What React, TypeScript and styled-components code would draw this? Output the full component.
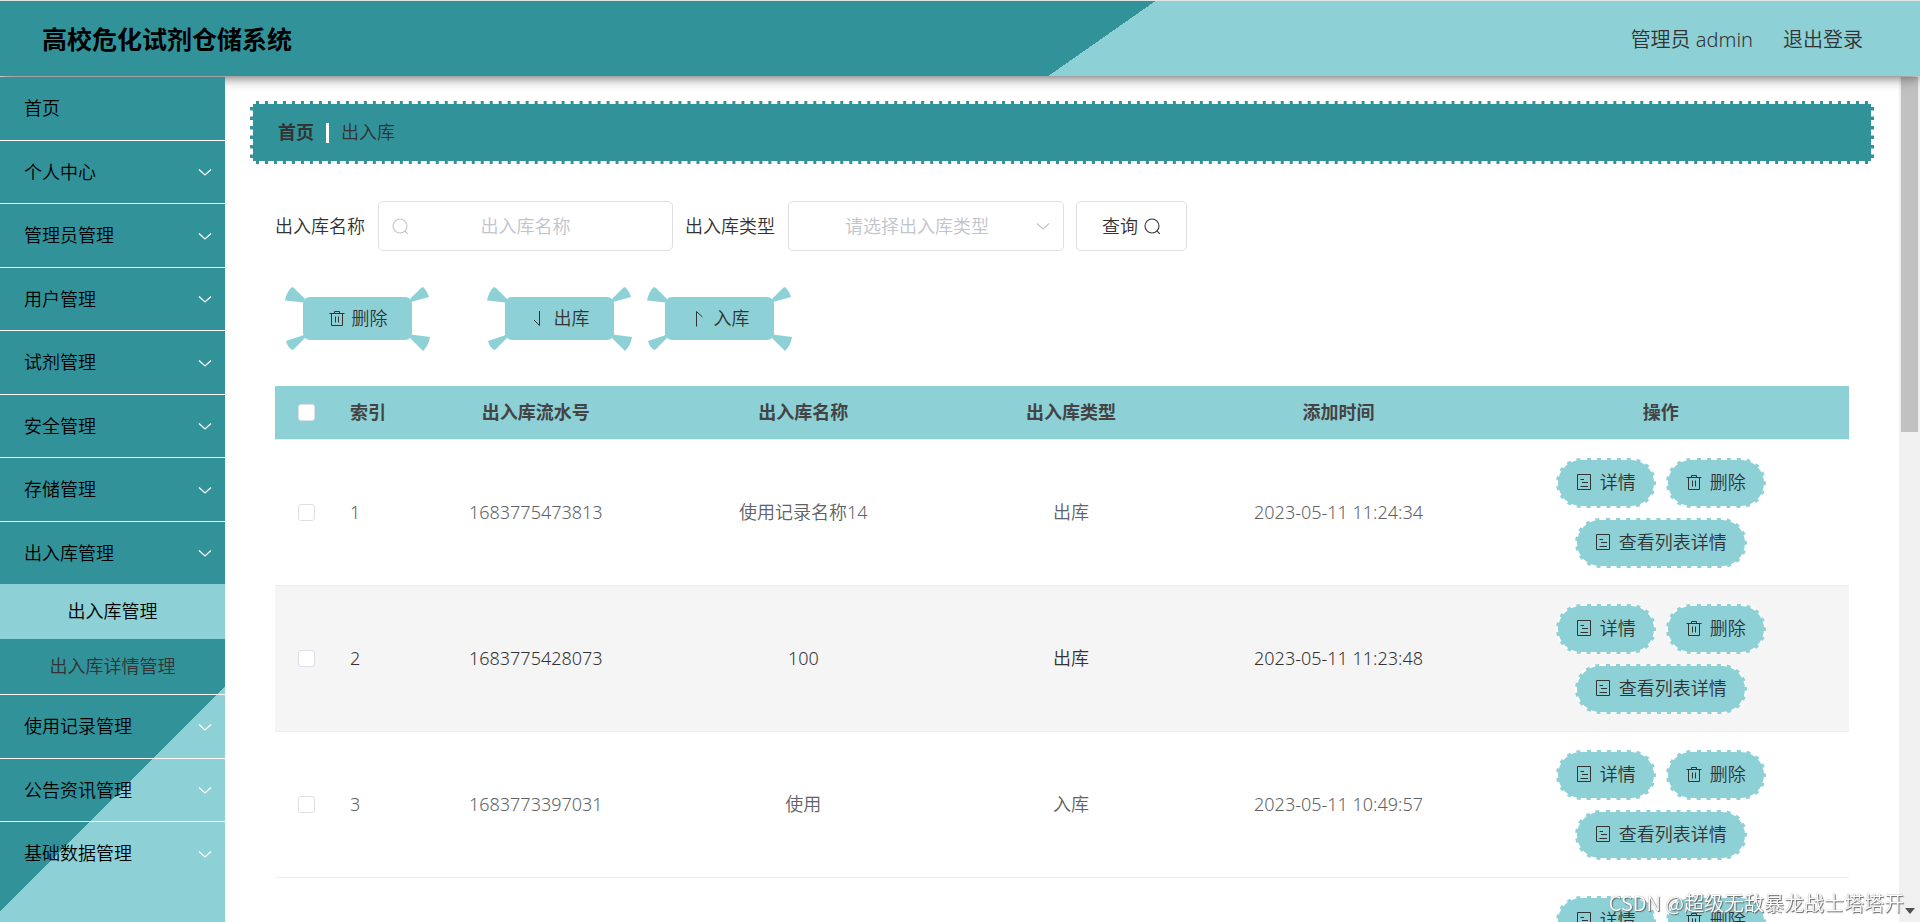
import React from "react";
import styled, { createGlobalStyle } from "styled-components";

const DEEP = "#31929a";
const LIGHT = "#8dd0d6";
const LINE = "#dcdfe6";

const GlobalStyle = createGlobalStyle`
  *, *::before, *::after { box-sizing: border-box; }
  body {
    margin: 0;
    background: #fff;
    color: #333;
    font-family: "Noto Sans", "Noto Sans CJK SC", sans-serif;
    font-size: 18px;
    font-weight: 350;
    line-height: 23px;
  }
  button, input, select { font: inherit; }
`;

const Page = styled.div`
  height: 100vh;
  display: flex;
  flex-direction: column;
  overflow: hidden;
`;

const Header = styled.header`
  position: relative;
  flex: none;
  height: 76px;
  margin-bottom: 1px;
  padding: 2px 57px 0 42px;
  display: flex;
  align-items: center;
  justify-content: space-between;
  border-top: 1px solid #dfe6e4;
  background: linear-gradient(145deg, ${DEEP} 57%, ${LIGHT} 57%);
  box-shadow: 0 1px 12px #555;
  z-index: 1;
`;

const Title = styled.h1`
  margin: 0;
  font-size: 25px;
  font-weight: 700;
  color: #000;
`;

const Account = styled.div`
  display: flex;
  gap: 30px;
  font-size: 20px;
  a { color: #333; text-decoration: none; }
`;

const Body = styled.div`
  flex: 1;
  min-height: 0;
  display: flex;
`;

const Sidebar = styled.nav`
  position: relative;
  z-index: 2;
  flex: none;
  width: 225px;
  background: linear-gradient(135deg, ${DEEP} 78%, ${LIGHT} 78%);
`;

const Menu = styled.ul`
  margin: 0;
  padding: 0;
  list-style: none;
`;

const MenuItem = styled.li`
  border-bottom: 1px solid #fff;
  &:last-child { border-bottom: 0; }
  &:nth-child(odd) > button { height: 63px; }
`;

const MenuButton = styled.button`
  width: 100%;
  height: 62px;
  padding: 0 13px 0 24px;
  display: flex;
  align-items: center;
  justify-content: space-between;
  border: 0;
  background: none;
  color: #000;
  svg { color: #fff; }
`;

const SubLink = styled.a<{ $active?: boolean }>`
  height: 55px;
  display: flex;
  align-items: center;
  justify-content: center;
  background: ${(p) => (p.$active ? LIGHT : "transparent")};
  color: ${(p) => (p.$active ? "#000" : "#333")};
  text-decoration: none;
`;

const Main = styled.main`
  flex: 1;
  min-width: 0;
  overflow: hidden;
  padding: 24px 25px 0;
`;

const Breadcrumb = styled.nav`
  height: 63px;
  padding: 0 25px;
  display: flex;
  align-items: center;
  gap: 12px;
  border: 3px dashed #fff;
  background: ${DEEP};
  a { color: #333; text-decoration: none; font-weight: 700; }
`;

const Divider = styled.span`
  width: 3px;
  height: 20px;
  background: #fff;
`;

const Content = styled.section`
  padding: 37px 25px 0;
`;

const Filters = styled.form`
  display: flex;
  align-items: center;
  gap: 12px;
`;

const Field = styled.div`
  display: flex;
  align-items: center;
  gap: 13px;
  white-space: nowrap;
`;

const Control = styled.div<{ $width: number }>`
  position: relative;
  width: ${(p) => p.$width}px;
  height: 50px;
  color: #c0c4cc;
  input, select {
    width: 100%;
    height: 100%;
    padding: 0 37px;
    border: 1px solid ${LINE};
    border-radius: 5px;
    background: #fff;
    color: #c0c4cc;
    text-align: center;
    text-align-last: center;
    appearance: none;
    outline: 0;
  }
  select { padding: 0 37px 0 19px; }
  input::placeholder { color: #c0c4cc; opacity: 1; }
`;

const ControlIcon = styled.span<{ $side: "left" | "right" }>`
  position: absolute;
  top: 0;
  bottom: 0;
  ${(p) => p.$side}: 14px;
  display: flex;
  align-items: center;
  pointer-events: none;
`;

const QueryButton = styled.button`
  height: 50px;
  padding: 0 25px;
  display: flex;
  align-items: center;
  gap: 6px;
  border: 1px solid ${LINE};
  border-radius: 5px;
  background: #fff;
  color: #333;
`;

const Actions = styled.div`
  margin-top: 36px;
  display: flex;
  padding-left: 10px;
  gap: 16px;
`;

const WingedButton = styled.button<{ $apart?: boolean }>`
  position: relative;
  width: 144px;
  height: 64px;
  margin-right: ${(p) => (p.$apart ? 42 : 0)}px;
  padding: 0 0 2px;
  border: 0;
  background: none;
  color: #333;
`;

const Wings = styled.svg`
  position: absolute;
  inset: 0;
  overflow: visible;
`;

const WingLabel = styled.span`
  position: relative;
  padding-left: 2px;
  display: flex;
  align-items: center;
  justify-content: center;
  gap: 7px;
`;

const Table = styled.table`
  width: 100%;
  margin-top: 35px;
  border-collapse: separate;
  border-spacing: 0;
  table-layout: fixed;
  th, td {
    padding: 0 12px;
    text-align: center;
    border-bottom: 1px solid #ebeef5;
  }
  th {
    height: 54px;
    background: ${LIGHT};
    color: #444;
    font-weight: 700;
  }
  td { height: 146px; }
  th:nth-child(2), td:nth-child(2) { text-align: left; }
`;

const Row = styled.tr<{ $hover?: boolean }>`
  td {
    background: ${(p) => (p.$hover ? "#f5f5f5" : "#fff")};
    color: ${(p) => (p.$hover ? "#333" : "#606266")};
  }
`;

const Check = styled.input`
  appearance: none;
  display: block;
  width: 17px;
  height: 17px;
  margin: 0 auto;
  border: 1px solid ${LINE};
  border-radius: 3px;
  background: #fff;
`;

const Operations = styled.div`
  width: 220px;
  margin: 0 auto;
  display: flex;
  flex-wrap: wrap;
  justify-content: center;
  gap: 10px;
`;

const PillButton = styled.button`
  height: 50px;
  padding: 0 18px;
  display: flex;
  align-items: center;
  gap: 8px;
  border: 2px dashed #fff;
  border-radius: 25px;
  background: ${LIGHT};
  color: #333;
`;

const Scrollbar = styled.div`
  flex: none;
  width: 21px;
  padding: 0 2px 8px;
  display: flex;
  flex-direction: column;
  align-items: center;
  justify-content: space-between;
  background: #f0f0f0;
`;

const Thumb = styled.div`
  width: 17px;
  height: 355px;
  background: #c1c1c1;
`;

const Watermark = styled.div`
  position: fixed;
  right: 16px;
  bottom: 8px;
  z-index: 3;
  color: #fff;
  font-family: "Noto Sans CJK SC", sans-serif;
  font-size: 20px;
  text-shadow: 1px 1px 1px #666, 0 0 1px #888;
`;

const Chevron = () => (
  <svg width="14" height="14" viewBox="0 0 14 14" fill="none" stroke="currentColor" strokeWidth="1.2" aria-hidden>
    <path d="M1 4.500 7 10l6-5.500" />
  </svg>
);

const SearchIcon = () => (
  <svg width="17" height="17" viewBox="0 0 17 17" fill="none" stroke="currentColor" strokeWidth="1.1" aria-hidden>
    <circle cx="8" cy="8" r="7" />
    <path d="m12.800 12.800 3 3" />
  </svg>
);

const TrashIcon = () => (
  <svg width="16" height="17" viewBox="0 0 16 17" fill="none" stroke="currentColor" strokeWidth="1" aria-hidden>
    <path d="M.5 3.500h15M2.500 3.500v12h11v-12M5.500 3.500v-2h5v2M6.500 6.500v6M9.500 6.500v6" />
  </svg>
);

const DocIcon = () => (
  <svg width="16" height="17" viewBox="0 0 16 17" fill="none" stroke="currentColor" strokeWidth="1" aria-hidden>
    <path d="M1.500 .5h13v15h-13zM4.500 5.500h3.500M6 8.500h6M4.500 12.500h7.500" />
  </svg>
);

const DownIcon = () => (
  <svg width="16" height="17" viewBox="0 0 16 17" fill="none" stroke="currentColor" strokeWidth="1" aria-hidden>
    <path d="M8.500 1v14.500L3 10" />
  </svg>
);

const UpIcon = () => (
  <svg width="16" height="17" viewBox="0 0 16 17" fill="none" stroke="currentColor" strokeWidth="1" aria-hidden>
    <path d="M5.500 16.500V1.500l6 5.500" />
  </svg>
);

function Winged({ apart, icon, children }: { apart?: boolean; icon: React.ReactNode; children: React.ReactNode }) {
  return (
    <WingedButton type="button" $apart={apart}>
      <Wings width="144" height="64" viewBox="0 0 144 64" fill={LIGHT} aria-hidden>
        <rect x="18" y="10" width="109" height="43" rx="7" />
        <path d="M0 13.500C1 8 3.500 3 7 0L9 1 20 12 19 15.500z" />
        <path d="M144 10C143 6.500 141 3 138 0L136 1 125 12 126 15z" />
        <path d="M1 54C2 58 4 61 7 63L9 62 20 51 19 48z" />
        <path d="M145 50C144 56 142 60 138 64L136 62 125 51 126 47.500z" />
      </Wings>
      <WingLabel>{icon}{children}</WingLabel>
    </WingedButton>
  );
}

const MENU: { name: string; open?: boolean; leaf?: boolean }[] = [
  { name: "首页", leaf: true },
  { name: "个人中心" },
  { name: "管理员管理" },
  { name: "用户管理" },
  { name: "试剂管理" },
  { name: "安全管理" },
  { name: "存储管理" },
  { name: "出入库管理", open: true },
  { name: "使用记录管理" },
  { name: "公告资讯管理" },
  { name: "基础数据管理" },
];

const ROWS = [
  ["1", "1683775473813", "使用记录名称14", "出库", "2023-05-11 11:24:34"],
  ["2", "1683775428073", "100", "出库", "2023-05-11 11:23:48"],
  ["3", "1683773397031", "使用", "入库", "2023-05-11 10:49:57"],
  ["", "", "", "", ""],
];

export default function App() {
  return (
    <>
      <GlobalStyle />
      <Page>
        <Header>
          <Title>高校危化试剂仓储系统</Title>
          <Account>
            <a href="#account">管理员 admin</a>
            <a href="#logout">退出登录</a>
          </Account>
        </Header>
        <Body>
          <Sidebar>
            <Menu>
              {MENU.map((m) => (
                <MenuItem key={m.name}>
                  <MenuButton type="button">
                    {m.name}
                    {!m.leaf && <Chevron />}
                  </MenuButton>
                  {m.open && (
                    <>
                      <SubLink href="#stock" $active>出入库管理</SubLink>
                      <SubLink href="#stock-detail">出入库详情管理</SubLink>
                    </>
                  )}
                </MenuItem>
              ))}
            </Menu>
          </Sidebar>
          <Main>
            <Breadcrumb>
              <a href="#home">首页</a>
              <Divider />
              <span>出入库</span>
            </Breadcrumb>
            <Content>
              <Filters>
                <Field>
                  <label htmlFor="name">出入库名称</label>
                  <Control $width={295}>
                    <input id="name" placeholder="出入库名称" />
                    <ControlIcon $side="left"><SearchIcon /></ControlIcon>
                  </Control>
                </Field>
                <Field>
                  <label htmlFor="type">出入库类型</label>
                  <Control $width={276}>
                    <select id="type" defaultValue="">
                      <option value="">请选择出入库类型</option>
                    </select>
                    <ControlIcon $side="right"><Chevron /></ControlIcon>
                  </Control>
                </Field>
                <QueryButton type="button">查询<SearchIcon /></QueryButton>
              </Filters>
              <Actions>
                <Winged apart icon={<TrashIcon />}>删除</Winged>
                <Winged icon={<DownIcon />}>出库</Winged>
                <Winged icon={<UpIcon />}>入库</Winged>
              </Actions>
              <Table>
                <colgroup>
                  <col width="63" />
                  <col width="64" />
                  <col width="17%" />
                  <col width="17%" />
                  <col width="17%" />
                  <col width="17%" />
                  <col />
                </colgroup>
                <thead>
                  <tr>
                    <th><Check type="checkbox" aria-label="全选" /></th>
                    <th>索引</th>
                    <th>出入库流水号</th>
                    <th>出入库名称</th>
                    <th>出入库类型</th>
                    <th>添加时间</th>
                    <th>操作</th>
                  </tr>
                </thead>
                <tbody>
                  {ROWS.map((r, i) => (
                    <Row key={i} $hover={i === 1}>
                      <td><Check type="checkbox" aria-label="选择" /></td>
                      {r.map((c, j) => <td key={j}>{c}</td>)}
                      <td>
                        <Operations>
                          <PillButton type="button"><DocIcon />详情</PillButton>
                          <PillButton type="button"><TrashIcon />删除</PillButton>
                          <PillButton type="button"><DocIcon />查看列表详情</PillButton>
                        </Operations>
                      </td>
                    </Row>
                  ))}
                </tbody>
              </Table>
            </Content>
          </Main>
          <Scrollbar aria-hidden>
            <Thumb />
            <svg width="10" height="6" viewBox="0 0 10 6" fill="#505050"><path d="M0 0h10L5 6z" /></svg>
          </Scrollbar>
        </Body>
      </Page>
      <Watermark>CSDN @超级无敌暴龙战士塔塔开</Watermark>
    </>
  );
}
